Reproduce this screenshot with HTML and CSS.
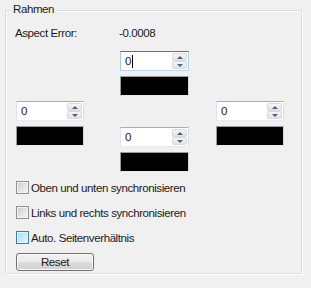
FILE: index.html
```html
<!DOCTYPE html>
<html lang="de">
<head>
  <meta charset="UTF-8">
  <title>Rahmen</title>
  <link rel="stylesheet" href="styles.css">
</head>
<body>
  <div class="group">
    <span class="group-title">Rahmen</span>

    <div class="aspect-row">
      <span class="aspect-label">Aspect Error:</span>
      <span class="aspect-value">-0.0008</span>
    </div>

    <div class="frame-grid">
      <div class="spin-pair top">
        <div class="spin focused">
          <span class="spin-text">0<span class="caret"></span></span>
          <div class="spin-buttons">
            <span class="spin-btn up"></span>
            <span class="spin-btn down"></span>
          </div>
        </div>
        <div class="color-box"></div>
      </div>

      <div class="spin-pair left">
        <div class="spin">
          <span class="spin-text">0</span>
          <div class="spin-buttons">
            <span class="spin-btn up"></span>
            <span class="spin-btn down"></span>
          </div>
        </div>
        <div class="color-box"></div>
      </div>

      <div class="spin-pair bottom">
        <div class="spin">
          <span class="spin-text">0</span>
          <div class="spin-buttons">
            <span class="spin-btn up"></span>
            <span class="spin-btn down"></span>
          </div>
        </div>
        <div class="color-box"></div>
      </div>

      <div class="spin-pair right">
        <div class="spin">
          <span class="spin-text">0</span>
          <div class="spin-buttons">
            <span class="spin-btn up"></span>
            <span class="spin-btn down"></span>
          </div>
        </div>
        <div class="color-box"></div>
      </div>
    </div>

    <div class="options">
      <label class="check"><span class="box"></span>Oben und unten synchronisieren</label>
      <label class="check"><span class="box"></span>Links und rechts synchronisieren</label>
      <label class="check"><span class="box hot"></span>Auto. Seitenverhältnis</label>
    </div>

    <button class="reset">Reset</button>
  </div>
</body>
</html>
```

FILE: styles.css
```css
body {
  margin: 0;
  width: 311px;
  height: 288px;
  background: #f0f0f0;
  font-family: "Liberation Sans", Arial, sans-serif;
  font-size: 11.5px;
  letter-spacing: -0.4px;
  color: #1a1a1a;
  overflow: hidden;
}

/* Gruppenrahmen im Win7-Stil: graue Linie + weisse Linie */
.group {
  position: relative;
  box-sizing: border-box;
  width: 297px;
  height: 264px;
  margin: 10px 0 0 5px;
  padding: 15px 0 0 10px;
  border: 1px solid #d5dfe5;
  box-shadow: 1px 1px 0 #fff, inset 1px 1px 0 #fff;
}
.group-title {
  position: absolute;
  top: -9px;
  left: 5px;
  padding: 0 2px;
  line-height: 15px;
  background: #f0f0f0;
}

.aspect-row {
  display: flex;
  line-height: 15px;
}
.aspect-label {
  width: 104px;
  margin-left: -1px;
}

.frame-grid {
  display: grid;
  grid-template-columns: 104px 96px 68px;
  row-gap: 5px;
  margin-top: 10px;
}
.top { grid-column: 2; grid-row: 1; width: 69px; }
.left { grid-column: 1; grid-row: 2; width: 68px; }
.bottom { grid-column: 2; grid-row: 2; width: 69px; margin-top: 26px; }
.right { grid-column: 3; grid-row: 2; width: 68px; }

.spin-pair {
  display: flex;
  flex-direction: column;
  gap: 5px;
}

.spin {
  display: flex;
  align-items: center;
  box-sizing: border-box;
  height: 20px;
  background: #fff;
  border: 1px solid;
  border-color: #abadb3 #dbdfe6 #e3e9ef #e2e3ea;
}
.spin.focused {
  border-color: #3d7bad #b5cfe7 #b7d9ed #a4c9e3;
}
.spin-text {
  flex: 1;
  display: flex;
  align-items: center;
  padding-left: 4px;
  line-height: 15px;
}
.caret {
  width: 1px;
  height: 13px;
  margin-left: 1px;
  background: #000;
}
.spin-buttons {
  display: flex;
  flex-direction: column;
  align-self: stretch;
  width: 15px;
  margin: 1px;
}
.spin-btn {
  flex: 1;
  display: flex;
  align-items: center;
  justify-content: center;
  border: 1px solid #d9dadc;
  border-radius: 2px;
  background: linear-gradient(#f6f6f6, #e2e2e2);
}
.spin-btn::before {
  content: "";
  border-left: 3px solid transparent;
  border-right: 3px solid transparent;
}
.spin-btn.up::before { border-bottom: 3px solid #4d6185; }
.spin-btn.down::before { border-top: 3px solid #4d6185; }

.color-box {
  box-sizing: border-box;
  height: 20px;
  background: #000;
  border: 1px solid;
  border-color: #9a9a9a #d8d8d8 #e8e8e8 #9a9a9a;
}

.options {
  display: flex;
  flex-direction: column;
  gap: 10px;
  margin-top: 8px;
}
.check {
  display: flex;
  align-items: center;
  height: 15px;
}
.box {
  box-sizing: border-box;
  width: 13px;
  height: 13px;
  margin-right: 2px;
  border: 1px solid #8e8f8f;
  background: linear-gradient(135deg, #c9cbce, #f7f7f7);
  box-shadow: inset 0 0 0 1px #f4f4f4;
}
.box.hot {
  border-color: #3c7fb1;
  background: linear-gradient(135deg, #a9dbf6, #e6f5fd);
  box-shadow: inset 0 0 0 1px #def9fa;
}

.reset {
  display: block;
  box-sizing: border-box;
  width: 78px;
  height: 18px;
  margin-top: 8px;
  padding: 0;
  font-family: inherit;
  font-size: 11.5px;
  letter-spacing: inherit;
  color: #1a1a1a;
  border: 1px solid #707070;
  border-radius: 3px;
  background: linear-gradient(#f2f2f2 0%, #ebebeb 50%, #dddddd 50%, #cfcfcf 100%);
  box-shadow: inset 0 0 0 1px #fcfcfc;
}
```
